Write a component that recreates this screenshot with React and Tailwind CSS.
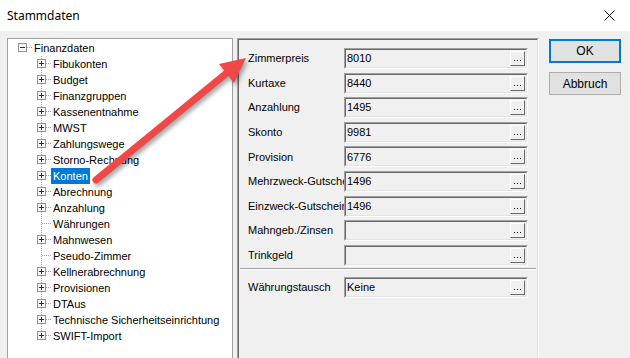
const tree = [
  { label: 'Fibukonten', kids: true },
  { label: 'Budget', kids: true },
  { label: 'Finanzgruppen', kids: true },
  { label: 'Kassenentnahme', kids: true },
  { label: 'MWST', kids: true },
  { label: 'Zahlungswege', kids: true },
  { label: 'Storno-Rechnung', kids: true },
  { label: 'Konten', kids: true, selected: true },
  { label: 'Abrechnung', kids: true },
  { label: 'Anzahlung', kids: true },
  { label: 'Währungen', kids: false },
  { label: 'Mahnwesen', kids: true },
  { label: 'Pseudo-Zimmer', kids: false },
  { label: 'Kellnerabrechnung', kids: true },
  { label: 'Provisionen', kids: true },
  { label: 'DTAus', kids: true },
  { label: 'Technische Sicherheitseinrichtung', kids: true },
  { label: 'SWIFT-Import', kids: true },
];

const fields = [
  ['Zimmerpreis', '8010'],
  ['Kurtaxe', '8440'],
  ['Anzahlung', '1495'],
  ['Skonto', '9981'],
  ['Provision', '6776'],
  ['Mehrzweck-Gutschein', '1496'],
  ['Einzweck-Gutschein', '1496'],
  ['Mahngeb./Zinsen', ''],
  ['Trinkgeld', ''],
];

function TreeGlyph({ box, minus, vline, last }) {
  return (
    <svg width="14" height="16" viewBox="0 0 14 16" className="shrink-0" shapeRendering="crispEdges">
      {vline && (
        <line x1="4.5" y1="0" x2="4.5" y2={last ? 8 : 16} stroke="#a0a0a0" strokeDasharray="1 1" />
      )}
      <line x1={box ? 9 : 5} y1="7.5" x2="14" y2="7.5" stroke="#a0a0a0" strokeDasharray="1 1" />
      {box && (
        <g>
          <rect x="0.5" y="3.5" width="8" height="8" fill="#f7f7f7" stroke="#919191" />
          <line x1="2" y1="7.5" x2="7" y2="7.5" stroke="#1c2f66" />
          {!minus && <line x1="4.5" y1="5" x2="4.5" y2="10" stroke="#1c2f66" />}
        </g>
      )}
    </svg>
  );
}

function DotsButton() {
  return (
    <div className="w-[15px] h-[15px] shrink-0 border border-t-white border-l-white border-r-[#696969] border-b-[#696969] bg-[#f0f0f0]">
      <svg width="13" height="13" viewBox="0 0 13 13" shapeRendering="crispEdges" className="block">
        <rect x="3" y="8" width="1" height="1" fill="#000" />
        <rect x="6" y="8" width="1" height="1" fill="#000" />
        <rect x="9" y="8" width="1" height="1" fill="#000" />
      </svg>
    </div>
  );
}

function Field({ label, value }) {
  return (
    <div className="flex items-center h-[21px]">
      <div className="w-[96px] overflow-hidden whitespace-nowrap">{label}</div>
      <div className="flex-1 h-full border border-t-[#a0a0a0] border-l-[#a0a0a0] border-r-white border-b-white">
        <div className="h-full flex items-center pl-[1px] pr-[1px] border border-t-[#696969] border-l-[#696969] border-r-[#e3e3e3] border-b-[#e3e3e3]">
          <span className="flex-1 whitespace-nowrap">{value}</span>
          <DotsButton />
        </div>
      </div>
    </div>
  );
}

export default function App() {
  return (
    <div className="relative w-[630px] h-[358px] overflow-hidden bg-[#f0f0f0] text-[11px] text-black font-['Liberation_Sans',Arial,sans-serif]">
      {/* title bar */}
      <div className="h-[31px] bg-white flex items-center justify-between pl-[7px] pr-[15px]">
        <span className="text-[12px] font-['Noto_Sans',sans-serif] text-[#000]">Stammdaten</span>
        <svg width="11" height="11" viewBox="0 0 11 11">
          <path d="M0.5 0.5 L10.5 10.5 M10.5 0.5 L0.5 10.5" stroke="#111" strokeWidth="1" />
        </svg>
      </div>

      <div className="flex pt-[7px] pl-[7px] h-[327px]">
        {/* tree */}
        <div className="w-[226px] h-[330px] bg-white border border-[#a0a0a0] pl-[10px] pt-[1px]">
          <div className="flex items-center h-[16px]">
            <TreeGlyph box minus />
            <span className="px-[2px] leading-[16px] whitespace-nowrap">Finanzdaten</span>
          </div>
          <div className="pl-[19px]">
            {tree.map((t, i) => (
              <div key={t.label} className="flex items-center h-[16px]">
                <TreeGlyph box={t.kids} vline last={i === tree.length - 1} />
                <span
                  className={
                    t.selected
                      ? 'px-[2px] leading-[16px] whitespace-nowrap bg-[#0078d7] text-white'
                      : 'px-[2px] leading-[16px] whitespace-nowrap'
                  }
                >
                  {t.label}
                </span>
              </div>
            ))}
          </div>
        </div>

        {/* fields panel */}
        <div className="ml-[4px] w-[302px] h-[330px] border border-t-[#a0a0a0] border-l-[#a0a0a0] border-r-white border-b-white">
          <div className="h-full border border-t-[#696969] border-l-[#696969] border-r-[#e3e3e3] border-b-[#e3e3e3] pt-[8px] px-[9px]">
            <div className="flex flex-col gap-[3.6px]">
              {fields.map(([l, v]) => (
                <Field key={l} label={l} value={v} />
              ))}
            </div>
            <div className="mt-[2px] -mx-[8px] border-t border-t-[#a0a0a0] border-b border-b-white" />
            <div className="mt-[7px]">
              <Field label="Währungstausch" value="Keine" />
            </div>
          </div>
        </div>

        {/* buttons */}
        <div className="ml-[10px] w-[72px] flex flex-col gap-[9px] pt-[1px]">
          <button className="h-[24px] bg-[#e1e1e1] border-2 border-[#0078d7] text-[12px]">OK</button>
          <button className="h-[23px] bg-[#e1e1e1] border border-[#adadad] text-[12px]">Abbruch</button>
        </div>
      </div>

      {/* red annotation arrow */}
      <svg
        className="absolute inset-0 pointer-events-none"
        width="630"
        height="358"
        viewBox="0 0 630 358"
        style={{ filter: 'drop-shadow(2px 3px 2px rgba(0,0,0,0.35))' }}
      >
        <line x1="96" y1="180" x2="228" y2="72" stroke="#f04848" strokeWidth="7" strokeLinecap="round" />
        <polygon points="246,58 234,83 219,64" fill="#f04848" />
      </svg>
    </div>
  );
}
